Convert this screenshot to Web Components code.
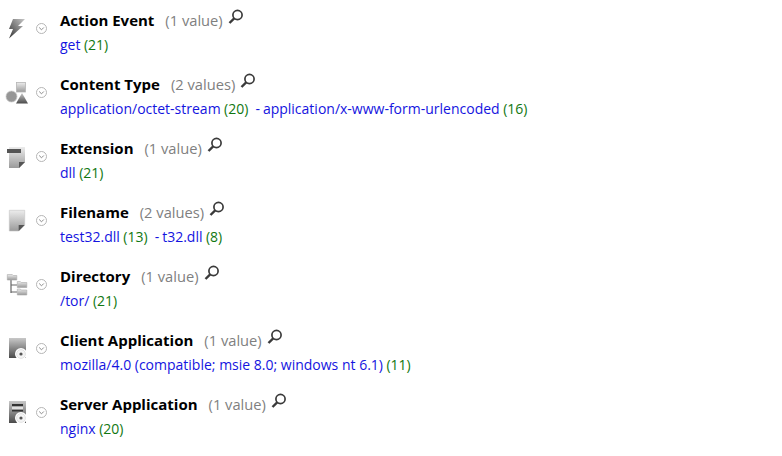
<!DOCTYPE html>
<html>
<head>
<meta charset="utf-8">
<title>Field summary</title>
<style>
  body { margin: 0; background: #fff; font-family: "Open Sans", sans-serif; }
</style>
</head>
<body>
<field-list>
  <field-row icon="bolt" name="Action Event" count="(1 value)">
    <field-value count="21">get</field-value>
  </field-row>
  <field-row icon="shapes" name="Content Type" count="(2 values)">
    <field-value count="20">application/octet-stream</field-value>
    <field-value count="16" sep>application/x-www-form-urlencoded</field-value>
  </field-row>
  <field-row icon="ext" name="Extension" count="(1 value)">
    <field-value count="21">dll</field-value>
  </field-row>
  <field-row icon="file" name="Filename" count="(2 values)">
    <field-value count="13">test32.dll</field-value>
    <field-value count="8" sep>t32.dll</field-value>
  </field-row>
  <field-row icon="tree" name="Directory" count="(1 value)">
    <field-value count="21">/tor/</field-value>
  </field-row>
  <field-row icon="client" name="Client Application" count="(1 value)">
    <field-value count="11">mozilla/4.0 (compatible; msie 8.0; windows nt 6.1)</field-value>
  </field-row>
  <field-row icon="server" name="Server Application" count="(1 value)">
    <field-value count="20">nginx</field-value>
  </field-row>
</field-list>

<script>
const DEFS = `
  <defs>
    <linearGradient id="g" x1="0" y1="0" x2="0" y2="1">
      <stop offset="0" stop-color="#ececec"/><stop offset="1" stop-color="#9a9a9a"/>
    </linearGradient>
    <linearGradient id="d" x1="0" y1="0" x2="0" y2="1">
      <stop offset="0" stop-color="#c8c8c8"/><stop offset="1" stop-color="#4a4a4a"/>
    </linearGradient>
    <linearGradient id="b" x1="1" y1="0" x2="0" y2="1">
      <stop offset="0" stop-color="#c8c8c8"/><stop offset="1" stop-color="#333"/>
    </linearGradient>
  </defs>`;

const DISC = `<circle cx="21" cy="19" r="6" fill="#fff"/><circle cx="21" cy="19" r="4.4" fill="#f4f4f4" stroke="#ddd" stroke-width=".8"/><circle cx="21" cy="19" r="1.6" fill="#555"/>`;

// all icons are drawn 1:1 on a 30x26 box
const ICONS = {
  bolt: `<path d="M13 4h12l-7 7h5L9 23.5l4-9.5H9z" fill="url(#b)"/>`,
  shapes: `<rect x="16.5" y="3.5" width="9" height="9.5" fill="url(#g)" stroke="#b5b5b5" stroke-width=".8"/>
    <circle cx="11.5" cy="17.5" r="5.5" fill="#969696" stroke="#c8c8c8" stroke-width=".7"/>
    <path d="M22 14l6 10.5H16z" fill="url(#d)"/>`,
  ext: `<path d="M9 4h16v15l-6 6H9z" fill="url(#g)"/><path d="M19 25v-6h6z" fill="#555"/><rect x="7" y="6" width="14" height="4" fill="#555"/>`,
  file: `<path d="M9.3 3.3h15.4v14.7l-6 6H9.3z" fill="url(#g)" stroke="#c4c4c4" stroke-width=".6"/><path d="M18.7 24v-6h6z" fill="#555"/>`,
  tree: `<path d="M11 8v14M11 14h6M11 21h6" stroke="#666" stroke-width="1.2" fill="none"/>
    <path d="M7.3 3.5h5l1 1h3.5v4.5H7.3z" fill="url(#g)" stroke="#aaa" stroke-width=".6"/>
    <path d="M17.3 10.5h3l1 1h5.5v5H17.3z" fill="url(#g)" stroke="#aaa" stroke-width=".6"/>
    <path d="M17.3 18h3l1 1h5.5v5H17.3z" fill="url(#g)" stroke="#aaa" stroke-width=".6"/>`,
  client: `<rect x="9" y="3" width="17" height="20" fill="url(#d)"/>${DISC}`,
  server: `<rect x="9" y="2" width="17" height="22" fill="url(#d)"/><rect x="12" y="5" width="11" height="2" fill="#333"/><rect x="12" y="8" width="11" height="2" fill="#e0e0e0"/><rect x="12" y="11" width="11" height="1.5" fill="#333"/>${DISC}`
};

class FieldList extends HTMLElement {
  connectedCallback() {
    const shadowRoot = this.attachShadow({ mode: "open" });
    shadowRoot.innerHTML = `
      <style>
        :host { display: flex; flex-direction: column; gap: 14px; padding-top: 10px; }
      </style>
      <slot></slot>`;
  }
}

class FieldRow extends HTMLElement {
  connectedCallback() {
    const icon = this.getAttribute("icon");
    const shadowRoot = this.attachShadow({ mode: "open" });
    shadowRoot.innerHTML = `
      <style>
        :host { display: grid; grid-template-columns: 30px 30px 1fr; height: 50px; color: #000; }
        .icon { width: 30px; height: 26px; margin-top: 5px; }
        .toggle { width: 11px; height: 11px; margin: 13px 0 0 6px; }
        .head { display: flex; align-items: flex-start; height: 24px; line-height: 21px; }
        .name { font-size: 15px; font-weight: 700; }
        .count { font-size: 14.7px; color: #7f7f7f; margin-left: 11px; }
        .lens { width: 16px; height: 16px; margin: -1px 0 0 5px; }
        .values { font-size: 14px; line-height: 22px; display: flex; }
      </style>
      <svg class="icon" viewBox="0 0 30 26">${DEFS}${ICONS[icon]}</svg>
      <svg class="toggle" viewBox="0 0 11 11">
        <circle cx="5.5" cy="5.5" r="5" fill="#fff" stroke="#b5b5b5"/>
        <path d="M3.2 4.5l2.3 2.3 2.3-2.3" fill="none" stroke="#8a8a8a"/>
      </svg>
      <div>
        <div class="head">
          <span class="name">${this.getAttribute("name")}</span>
          <span class="count">${this.getAttribute("count")}</span>
          <svg class="lens" viewBox="0 0 16 16">
            <circle cx="9.5" cy="6" r="4.6" fill="none" stroke="#3a3a3a" stroke-width="1.7"/>
            <path d="M6.2 9.3l-4.7 4.7" stroke="#3a3a3a" stroke-width="2.4"/>
          </svg>
        </div>
        <div class="values"><slot></slot></div>
      </div>`;
  }
}

class FieldValue extends HTMLElement {
  connectedCallback() {
    const sep = this.hasAttribute("sep") ? `<span class="sep">-</span>` : "";
    const shadowRoot = this.attachShadow({ mode: "open" });
    shadowRoot.innerHTML = `
      <style>
        :host { display: inline-flex; white-space: pre; }
        .sep { color: #1414e0; margin: 0 3px 0 7px; }
        .link { color: #1414e0; }
        .num { color: #117711; margin-left: 3.5px; }
      </style>
      ${sep}<span class="link"><slot></slot></span>
      <span class="num">(${this.getAttribute("count")})</span>`;
  }
}

customElements.define("field-list", FieldList);
customElements.define("field-row", FieldRow);
customElements.define("field-value", FieldValue);
</script>
</body>
</html>
